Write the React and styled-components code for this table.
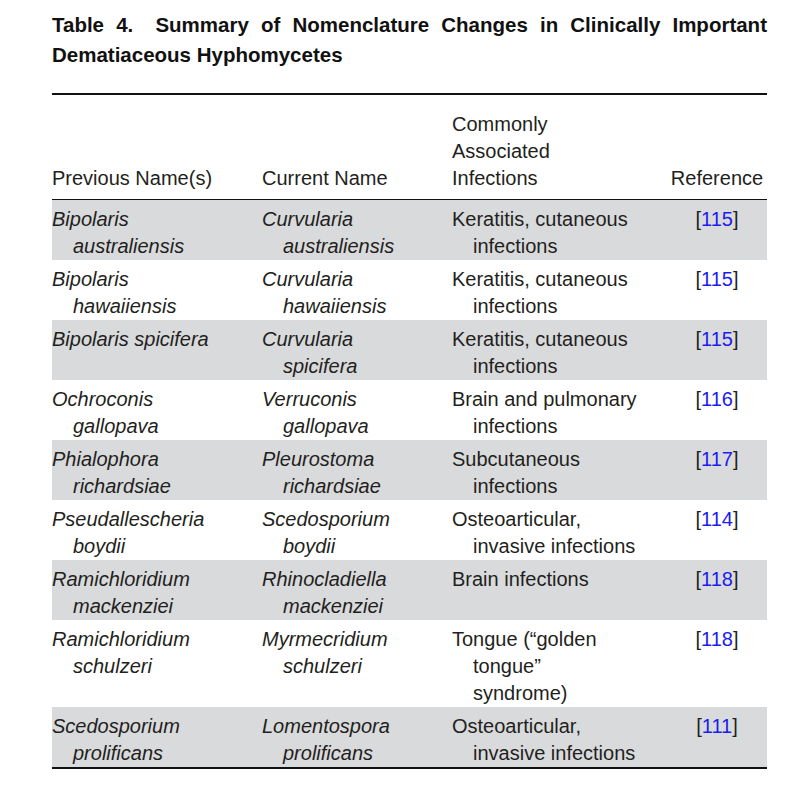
import React from "react";
import styled, { createGlobalStyle } from "styled-components";

const GlobalStyle = createGlobalStyle`
  html, body {
    margin: 0;
    padding: 0;
    background: #ffffff;
  }
  body {
    font-family: "Liberation Sans", Arial, Helvetica, sans-serif;
    color: #231f20;
  }
`;

const Page = styled.div`
  width: 715px;
  padding: 10px 19px 0 52px;
`;

const Title = styled.h1`
  margin: 0;
  font-family: "Liberation Sans", Arial, sans-serif;
  font-weight: 700;
  font-size: 20.5px;
  line-height: 30px;
  color: #111;
`;

const TitleLine = styled.span`
  display: block;
  text-align: ${(p) => (p.$justify ? "justify" : "left")};
  text-align-last: ${(p) => (p.$justify ? "justify" : "left")};
  white-space: nowrap;
`;

const Label = styled.span`
  margin-right: 10px;
`;

const Table = styled.div`
  margin-top: 23px;
  border-top: 2px solid #111;
  border-bottom: 2px solid #111;
  font-size: 20px;
  line-height: 27px;
`;

const columns = "210px 190px 215px 100px";

const HeaderRow = styled.div`
  display: grid;
  grid-template-columns: ${columns};
  align-items: end;
  padding: 16px 0 7px;
  border-bottom: 1px solid #111;
`;

const Row = styled.div`
  display: grid;
  grid-template-columns: ${columns};
  align-items: start;
  padding-top: 6px;
  background: ${(p) => (p.$shaded ? "#d9dadc" : "transparent")};
`;

const Cell = styled.div`
  font-style: ${(p) => (p.$italic ? "italic" : "normal")};
  text-align: ${(p) => (p.$center ? "center" : "left")};
`;

const Line = styled.span`
  display: block;
  padding-left: ${(p) => (p.$indent ? "21px" : "0")};
  white-space: nowrap;
`;

const RefLink = styled.span`
  color: #1c1cf0;
`;

const rows = [
  [["Bipolaris", "australiensis"], ["Curvularia", "australiensis"], ["Keratitis, cutaneous", "infections"], "115"],
  [["Bipolaris", "hawaiiensis"], ["Curvularia", "hawaiiensis"], ["Keratitis, cutaneous", "infections"], "115"],
  [["Bipolaris spicifera"], ["Curvularia", "spicifera"], ["Keratitis, cutaneous", "infections"], "115"],
  [["Ochroconis", "gallopava"], ["Verruconis", "gallopava"], ["Brain and pulmonary", "infections"], "116"],
  [["Phialophora", "richardsiae"], ["Pleurostoma", "richardsiae"], ["Subcutaneous", "infections"], "117"],
  [["Pseudallescheria", "boydii"], ["Scedosporium", "boydii"], ["Osteoarticular,", "invasive infections"], "114"],
  [["Ramichloridium", "mackenziei"], ["Rhinocladiella", "mackenziei"], ["Brain infections"], "118"],
  [["Ramichloridium", "schulzeri"], ["Myrmecridium", "schulzeri"], ["Tongue (\u201cgolden", "tongue\u201d", "syndrome)"], "118"],
  [["Scedosporium", "prolificans"], ["Lomentospora", "prolificans"], ["Osteoarticular,", "invasive infections"], "111"],
];

const Lines = ({ lines }) =>
  lines.map((t, i) => (
    <Line key={i} $indent={i > 0}>
      {t}
    </Line>
  ));

export default function App() {
  return (
    <>
      <GlobalStyle />
      <Page>
        <Title>
          <TitleLine $justify>
            <Label>Table 4.</Label> Summary of Nomenclature Changes in Clinically Important
          </TitleLine>
          <TitleLine>Dematiaceous Hyphomycetes</TitleLine>
        </Title>
        <Table>
          <HeaderRow>
            <Cell>Previous Name(s)</Cell>
            <Cell>Current Name</Cell>
            <Cell>
              <Line>Commonly</Line>
              <Line>Associated</Line>
              <Line>Infections</Line>
            </Cell>
            <Cell $center>Reference</Cell>
          </HeaderRow>
          {rows.map(([prev, cur, inf, ref], i) => (
            <Row key={i} $shaded={i % 2 === 0}>
              <Cell $italic>
                <Lines lines={prev} />
              </Cell>
              <Cell $italic>
                <Lines lines={cur} />
              </Cell>
              <Cell>
                <Lines lines={inf} />
              </Cell>
              <Cell $center>
                [<RefLink>{ref}</RefLink>]
              </Cell>
            </Row>
          ))}
        </Table>
      </Page>
    </>
  );
}
